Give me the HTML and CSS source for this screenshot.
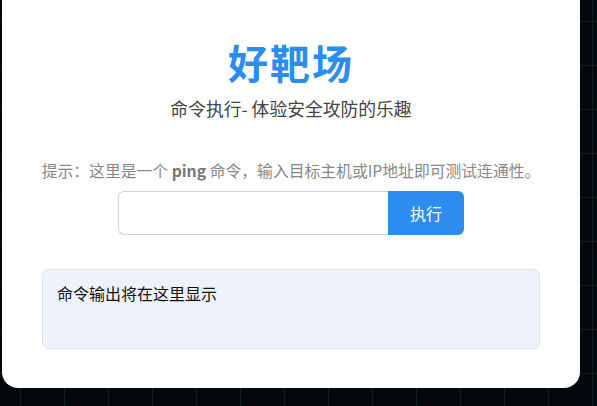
FILE: index.html
```html
<!DOCTYPE html>
<html lang="zh-CN">
<head>
<meta charset="utf-8">
<title>好靶场 - 命令执行</title>
<link rel="stylesheet" href="styles.css">
</head>
<body>
<div class="page">
  <div class="card">
    <h1 class="title">好靶场</h1>
    <p class="subtitle">命令执行- 体验安全攻防的乐趣</p>
    <p class="hint">提示：这里是一个 <b>ping</b> 命令，输入目标主机或IP地址即可测试连通性。</p>
    <form class="cmd-form" onsubmit="return false">
      <input class="cmd-input" type="text">
      <button class="cmd-btn" type="submit">执行</button>
    </form>
    <div class="output">命令输出将在这里显示</div>
  </div>
</div>
</body>
</html>
```
FILE: styles.css
```css
* { box-sizing: border-box; }
html, body {
  margin: 0;
  height: 100%;
}
body {
  background-color: #04080d;
  background-image:
    linear-gradient(to right, rgba(20, 70, 35, 0.45) 1px, transparent 1px),
    linear-gradient(to bottom, rgba(20, 70, 35, 0.45) 1px, transparent 1px);
  background-size: 44px 44px;
  background-position: 20px 21px;
  font-family: "Noto Sans CJK SC", "Noto Sans", sans-serif;
}
.page {
  padding-left: 2px;
}
.card {
  width: 578px;
  background: #ffffff;
  border-radius: 0 0 16px 16px;
  padding: 38px 40px 39px;
  text-align: center;
}
.title {
  margin: 0;
  font-size: 40px;
  line-height: 48px;
  font-weight: 700;
  color: #2d8cf0;
  letter-spacing: 2px;
}
.subtitle {
  margin: 10px 0 0;
  font-size: 17.8px;
  line-height: 24px;
  color: #444;
}
.hint {
  margin: 40px -10px 0;
  font-size: 15.8px;
  line-height: 22px;
  color: #888;
  white-space: nowrap;
}
.hint b {
  color: #777;
}
.cmd-form {
  margin-top: 9px;
  display: flex;
  justify-content: center;
}
.cmd-input {
  width: 270px;
  height: 44px;
  border: 1px solid #cfd3dc;
  border-right: none;
  border-radius: 6px 0 0 6px;
  padding: 0 12px;
  font-size: 15px;
  outline: none;
}
.cmd-btn {
  width: 76px;
  height: 44px;
  border: none;
  border-radius: 0 6px 6px 0;
  background: #2d8cf0;
  color: #fff;
  font-family: inherit;
  font-size: 16px;
}
.output {
  margin-top: 34px;
  height: 80px;
  background: #eef2fa;
  border: 1px solid #dde3ee;
  border-radius: 6px;
  padding: 11px 14px;
  text-align: left;
  font-size: 16px;
  line-height: 24px;
  color: #111;
}
```
